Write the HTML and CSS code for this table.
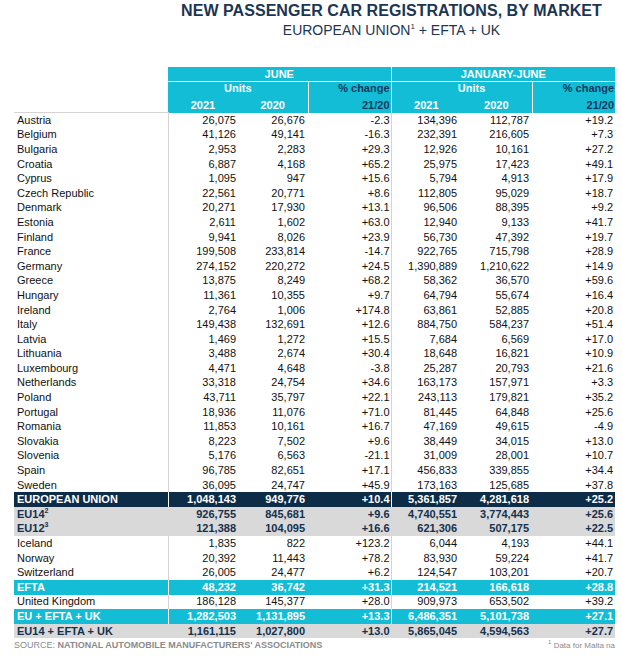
FILE: index.html
```html
<!DOCTYPE html>
<html>
<head>
<meta charset="utf-8">
<link rel="stylesheet" href="styles.css">
</head>
<body>
<div class="page">
  <header class="titles">
    <h1>NEW PASSENGER CAR REGISTRATIONS, BY MARKET</h1>
    <h2>EUROPEAN UNION<sup>1</sup> + EFTA + UK</h2>
  </header>
  <table class="reg">
    <colgroup>
      <col class="c-label"><col class="c-u"><col class="c-u"><col class="c-p"><col class="c-u"><col class="c-u2"><col class="c-p">
    </colgroup>
    <thead>
      <tr class="h1">
        <th class="blank"></th>
        <th colspan="3" class="grp">JUNE</th>
        <th colspan="3" class="grp sep">JANUARY-JUNE</th>
      </tr>
      <tr class="h2">
        <th class="blank"></th>
        <th colspan="2" class="w">Units</th>
        <th class="pc vsep">% change</th>
        <th colspan="2" class="w sep units2">Units</th>
        <th class="pc vsep">% change</th>
      </tr>
      <tr class="h3">
        <th class="blank line"></th>
        <th class="w">2021</th>
        <th class="w">2020</th>
        <th class="pc vsep">21/20</th>
        <th class="w sep">2021</th>
        <th class="w">2020</th>
        <th class="pc vsep">21/20</th>
      </tr>
    </thead>
    <tbody>
      <tr><td>Austria</td><td>26,075</td><td>26,676</td><td>-2.3</td><td>134,396</td><td>112,787</td><td>+19.2</td></tr>
      <tr><td>Belgium</td><td>41,126</td><td>49,141</td><td>-16.3</td><td>232,391</td><td>216,605</td><td>+7.3</td></tr>
      <tr><td>Bulgaria</td><td>2,953</td><td>2,283</td><td>+29.3</td><td>12,926</td><td>10,161</td><td>+27.2</td></tr>
      <tr><td>Croatia</td><td>6,887</td><td>4,168</td><td>+65.2</td><td>25,975</td><td>17,423</td><td>+49.1</td></tr>
      <tr><td>Cyprus</td><td>1,095</td><td>947</td><td>+15.6</td><td>5,794</td><td>4,913</td><td>+17.9</td></tr>
      <tr><td>Czech Republic</td><td>22,561</td><td>20,771</td><td>+8.6</td><td>112,805</td><td>95,029</td><td>+18.7</td></tr>
      <tr><td>Denmark</td><td>20,271</td><td>17,930</td><td>+13.1</td><td>96,506</td><td>88,395</td><td>+9.2</td></tr>
      <tr><td>Estonia</td><td>2,611</td><td>1,602</td><td>+63.0</td><td>12,940</td><td>9,133</td><td>+41.7</td></tr>
      <tr><td>Finland</td><td>9,941</td><td>8,026</td><td>+23.9</td><td>56,730</td><td>47,392</td><td>+19.7</td></tr>
      <tr><td>France</td><td>199,508</td><td>233,814</td><td>-14.7</td><td>922,765</td><td>715,798</td><td>+28.9</td></tr>
      <tr><td>Germany</td><td>274,152</td><td>220,272</td><td>+24.5</td><td>1,390,889</td><td>1,210,622</td><td>+14.9</td></tr>
      <tr><td>Greece</td><td>13,875</td><td>8,249</td><td>+68.2</td><td>58,362</td><td>36,570</td><td>+59.6</td></tr>
      <tr><td>Hungary</td><td>11,361</td><td>10,355</td><td>+9.7</td><td>64,794</td><td>55,674</td><td>+16.4</td></tr>
      <tr><td>Ireland</td><td>2,764</td><td>1,006</td><td>+174.8</td><td>63,861</td><td>52,885</td><td>+20.8</td></tr>
      <tr><td>Italy</td><td>149,438</td><td>132,691</td><td>+12.6</td><td>884,750</td><td>584,237</td><td>+51.4</td></tr>
      <tr><td>Latvia</td><td>1,469</td><td>1,272</td><td>+15.5</td><td>7,684</td><td>6,569</td><td>+17.0</td></tr>
      <tr><td>Lithuania</td><td>3,488</td><td>2,674</td><td>+30.4</td><td>18,648</td><td>16,821</td><td>+10.9</td></tr>
      <tr><td>Luxembourg</td><td>4,471</td><td>4,648</td><td>-3.8</td><td>25,287</td><td>20,793</td><td>+21.6</td></tr>
      <tr><td>Netherlands</td><td>33,318</td><td>24,754</td><td>+34.6</td><td>163,173</td><td>157,971</td><td>+3.3</td></tr>
      <tr><td>Poland</td><td>43,711</td><td>35,797</td><td>+22.1</td><td>243,113</td><td>179,821</td><td>+35.2</td></tr>
      <tr><td>Portugal</td><td>18,936</td><td>11,076</td><td>+71.0</td><td>81,445</td><td>64,848</td><td>+25.6</td></tr>
      <tr><td>Romania</td><td>11,853</td><td>10,161</td><td>+16.7</td><td>47,169</td><td>49,615</td><td>-4.9</td></tr>
      <tr><td>Slovakia</td><td>8,223</td><td>7,502</td><td>+9.6</td><td>38,449</td><td>34,015</td><td>+13.0</td></tr>
      <tr><td>Slovenia</td><td>5,176</td><td>6,563</td><td>-21.1</td><td>31,009</td><td>28,001</td><td>+10.7</td></tr>
      <tr><td>Spain</td><td>96,785</td><td>82,651</td><td>+17.1</td><td>456,833</td><td>339,855</td><td>+34.4</td></tr>
      <tr><td>Sweden</td><td>36,095</td><td>24,747</td><td>+45.9</td><td>173,163</td><td>125,685</td><td>+37.8</td></tr>
      <tr class="dark"><td>EUROPEAN UNION</td><td>1,048,143</td><td>949,776</td><td>+10.4</td><td>5,361,857</td><td>4,281,618</td><td>+25.2</td></tr>
      <tr class="grey"><td>EU14<sup>2</sup></td><td>926,755</td><td>845,681</td><td>+9.6</td><td>4,740,551</td><td>3,774,443</td><td>+25.6</td></tr>
      <tr class="grey"><td>EU12<sup>3</sup></td><td>121,388</td><td>104,095</td><td>+16.6</td><td>621,306</td><td>507,175</td><td>+22.5</td></tr>
      <tr><td>Iceland</td><td>1,835</td><td>822</td><td>+123.2</td><td>6,044</td><td>4,193</td><td>+44.1</td></tr>
      <tr><td>Norway</td><td>20,392</td><td>11,443</td><td>+78.2</td><td>83,930</td><td>59,224</td><td>+41.7</td></tr>
      <tr><td>Switzerland</td><td>26,005</td><td>24,477</td><td>+6.2</td><td>124,547</td><td>103,201</td><td>+20.7</td></tr>
      <tr class="cyan"><td>EFTA</td><td>48,232</td><td>36,742</td><td>+31.3</td><td>214,521</td><td>166,618</td><td>+28.8</td></tr>
      <tr><td>United Kingdom</td><td>186,128</td><td>145,377</td><td>+28.0</td><td>909,973</td><td>653,502</td><td>+39.2</td></tr>
      <tr class="cyan"><td>EU + EFTA + UK</td><td>1,282,503</td><td>1,131,895</td><td>+13.3</td><td>6,486,351</td><td>5,101,738</td><td>+27.1</td></tr>
      <tr class="grey"><td>EU14 + EFTA + UK</td><td>1,161,115</td><td>1,027,800</td><td>+13.0</td><td>5,865,045</td><td>4,594,563</td><td>+27.7</td></tr>
    </tbody>
  </table>
  <footer class="foot">
    <span class="src">SOURCE: <b>NATIONAL AUTOMOBILE MANUFACTURERS' ASSOCIATIONS</b></span>
    <span class="note"><sup>1</sup> Data for Malta na</span>
  </footer>
</div>
</body>
</html>
```
FILE: styles.css
```css
html, body {
  margin: 0;
  padding: 0;
  background: #fff;
}
.page {
  width: 622px;
  font-family: "Liberation Sans", Arial, sans-serif;
  color: #111;
}
.titles {
  margin-left: 168px;
  width: 447px;
  text-align: center;
  color: #1b3553;
  padding-top: 1px;
  height: 67px;
  box-sizing: border-box;
}
.titles h1 {
  margin: 0;
  font-size: 16px;
  line-height: 19px;
  font-weight: bold;
  letter-spacing: 0.05px;
}
.titles h2 {
  margin: 0;
  margin-top: 2px;
  font-size: 14px;
  line-height: 16px;
  font-weight: normal;
}
.titles h2 sup {
  font-size: 8px;
  vertical-align: 6px;
  line-height: 0;
}
.reg {
  margin-left: 14px;
  border-collapse: collapse;
  table-layout: fixed;
  width: 601px;
  font-size: 11px;
}
.c-label { width: 154px; }
.c-u { width: 70px; }
.c-u2 { width: 71px; }
.c-p { width: 83px; }
.reg th {
  background: #12bdd5;
  color: #fff;
  font-weight: bold;
  padding: 0;
  text-align: center;
  line-height: 13px;
}
.reg th.blank {
  background: #fff;
}
.reg th.blank.line {
  border-bottom: 1px solid #d4d4d4;
}
.reg tr.h1 th { height: 14px; }
.reg tr.h1 th.grp { border-bottom: 1px solid #fff; }
.reg tr.h2 th { height: 13px; }
.reg tr.h3 th { height: 16px; vertical-align: bottom; padding-bottom: 1px; }
.reg th.pc {
  color: #17375e;
  text-align: right;
  padding-right: 1px;
}
.reg th.sep, .reg th.vsep { border-left: 1px solid #fff; }
.reg th.units2 { text-indent: 20px; }
.reg td {
  padding: 0 2px 0 0;
  height: 14.6px;
  line-height: 13px;
  text-align: right;
  white-space: nowrap;
}
.reg td:first-child {
  text-align: left;
  padding: 0 0 0 3px;
  border-right: 1px solid #d4d4d4;
}
.reg td:nth-child(2) { padding-right: 2px; }
.reg td:nth-child(3) { padding-right: 3px; }
.reg td:nth-child(4) { padding-right: 1px; border-right: 1px solid #d4d4d4; }
.reg td:nth-child(5) { padding-right: 4px; }
.reg td:nth-child(6) { padding-right: 3px; }
.reg td:nth-child(7) { padding-right: 2px; }
.reg tr.dark td {
  background: #0d2c47;
  color: #fff;
  font-weight: bold;
  border-color: #fff;
}
.reg tr.cyan td {
  background: #12bdd5;
  color: #fff;
  font-weight: bold;
  border-color: #fff;
}
.reg tr.grey td {
  background: #d9d9d9;
  color: #14304d;
  font-weight: bold;
  border-color: #d9d9d9;
}
.reg sup {
  font-size: 7px;
  line-height: 0;
  vertical-align: 5px;
}
.foot {
  margin: 0 7px 0 14px;
  display: flex;
  justify-content: space-between;
  align-items: baseline;
  color: #8a8a8a;
  padding-top: 2px;
}
.foot .src {
  font-size: 9px;
}
.foot .note {
  font-size: 8px;
}
.foot .note sup {
  font-size: 6px;
  line-height: 0;
  vertical-align: 4px;
}
```
